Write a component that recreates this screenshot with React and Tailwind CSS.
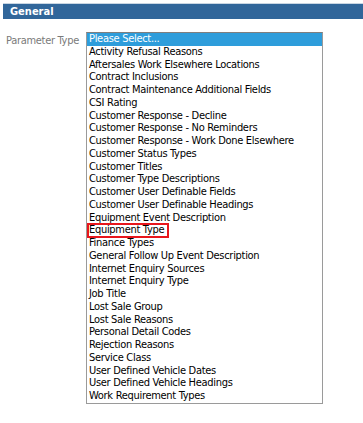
import React from "react";

const items = [
  "Please Select...",
  "Activity Refusal Reasons",
  "Aftersales Work Elsewhere Locations",
  "Contract Inclusions",
  "Contract Maintenance Additional Fields",
  "CSI Rating",
  "Customer Response - Decline",
  "Customer Response - No Reminders",
  "Customer Response - Work Done Elsewhere",
  "Customer Status Types",
  "Customer Titles",
  "Customer Type Descriptions",
  "Customer User Definable Fields",
  "Customer User Definable Headings",
  "Equipment Event Description",
  "Equipment Type",
  "Finance Types",
  "General Follow Up Event Description",
  "Internet Enquiry Sources",
  "Internet Enquiry Type",
  "Job Title",
  "Lost Sale Group",
  "Lost Sale Reasons",
  "Personal Detail Codes",
  "Rejection Reasons",
  "Service Class",
  "User Defined Vehicle Dates",
  "User Defined Vehicle Headings",
  "Work Requirement Types",
];

const App = () => {
  return (
    <div className="w-[363px] h-[423px] bg-white pt-[3px] pl-[3px] font-['DejaVu_Sans_Condensed','DejaVu_Sans',sans-serif] text-[11px] tracking-[-0.3px]">
      <div className="border-t border-[#c9d6e3] bg-[#31669a] h-[16px] pl-[7px] text-white font-bold text-[11px] leading-[15px] tracking-normal">
        General
      </div>
      <div className="flex mt-[13px]">
        <div className="w-[83px] pl-[3px] pt-[3px] text-[#7a7a7a] leading-[12px]">Parameter Type</div>
        <div className="relative w-[237px] border border-[#9a9a9a] border-t-[#7f7f7f]">
          {items.map((item, i) => (
            <div
              key={i}
              className={`h-[12.75px] leading-[12.75px] pl-[2px] whitespace-nowrap ${
                i === 0 ? "bg-[#2e9ddb] text-white" : "text-black"
              }`}
            >
              {item}
            </div>
          ))}
          <div className="absolute left-[0px] top-[190px] w-[82px] h-[15px] border-2 border-[#e8161c]" />
        </div>
      </div>
    </div>
  );
};

export default App;
